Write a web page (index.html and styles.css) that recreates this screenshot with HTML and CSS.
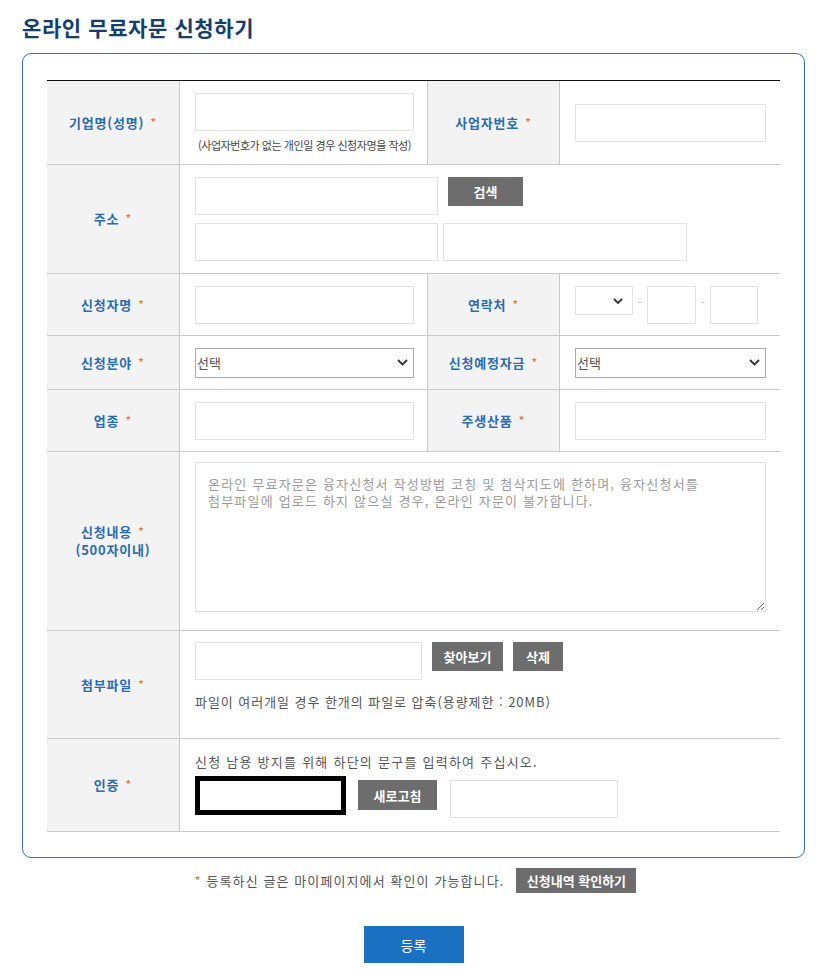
FILE: index.html
```html
<!DOCTYPE html>
<html lang="ko">
<head>
<meta charset="utf-8">
<title>온라인 무료자문 신청하기</title>
<link rel="stylesheet" href="styles.css">
</head>
<body>
<div class="page">
  <h1 class="title">온라인 무료자문 신청하기</h1>
  <div class="box">
    <table class="form">
      <colgroup><col class="c-lab"><col class="c-val"><col class="c-lab2"><col class="c-val2"></colgroup>
      <tbody>
        <tr class="r1">
          <th>기업명(성명)<span class="req">*</span></th>
          <td class="mid">
            <div class="stack">
              <input class="inp w219" type="text">
              <p class="note">(사업자번호가 없는 개인일 경우 신청자명을 작성)</p>
            </div>
          </td>
          <th>사업자번호<span class="req">*</span></th>
          <td><input class="inp w191" type="text"></td>
        </tr>
        <tr class="r2">
          <th>주소<span class="req">*</span></th>
          <td colspan="3">
            <div class="line gap10"><input class="inp w243" type="text"><button class="btn w75" type="button">검색</button></div>
            <div class="line gap5 mt8"><input class="inp w243" type="text"><input class="inp w244" type="text"></div>
          </td>
        </tr>
        <tr class="r3">
          <th>신청자명<span class="req">*</span></th>
          <td class="mid"><input class="inp w219" type="text"></td>
          <th>연락처<span class="req">*</span></th>
          <td>
            <div class="line phone">
              <span class="sel-wrap">
                <select class="sel sel-light w58"><option></option></select>
                <svg class="chev chev-sm" width="10" height="6" viewBox="0 0 10 6"><path d="M1 1l4 4 4-4" fill="none" stroke="#333" stroke-width="1.8"/></svg>
              </span>
              <span class="dash">-</span>
              <input class="inp w49" type="text">
              <span class="dash">-</span>
              <input class="inp w48" type="text">
            </div>
          </td>
        </tr>
        <tr class="r4">
          <th>신청분야<span class="req">*</span></th>
          <td class="mid">
            <span class="sel-wrap">
              <select class="sel w219"><option>선택</option></select>
              <svg class="chev" width="11" height="7" viewBox="0 0 11 7"><path d="M1 1l4.5 4.5 4.5-4.5" fill="none" stroke="#333" stroke-width="1.9"/></svg>
            </span>
          </td>
          <th>신청예정자금<span class="req">*</span></th>
          <td>
            <span class="sel-wrap">
              <select class="sel w191"><option>선택</option></select>
              <svg class="chev" width="11" height="7" viewBox="0 0 11 7"><path d="M1 1l4.5 4.5 4.5-4.5" fill="none" stroke="#333" stroke-width="1.9"/></svg>
            </span>
          </td>
        </tr>
        <tr class="r5">
          <th>업종<span class="req">*</span></th>
          <td class="mid"><input class="inp w219" type="text"></td>
          <th>주생산품<span class="req">*</span></th>
          <td><input class="inp w191" type="text"></td>
        </tr>
        <tr class="r6">
          <th>신청내용<span class="req">*</span><br>(500자이내)</th>
          <td colspan="3" class="top-cell pad10">
            <textarea class="txt" placeholder="온라인 무료자문은 융자신청서 작성방법 코칭 및 첨삭지도에 한하며, 융자신청서를&#10;첨부파일에 업로드 하지 않으실 경우, 온라인 자문이 불가합니다."></textarea>
          </td>
        </tr>
        <tr class="r7">
          <th>첨부파일<span class="req">*</span></th>
          <td colspan="3" class="top-cell pad11">
            <div class="line gap10"><input class="inp w227" type="text"><button class="btn w71" type="button">찾아보기</button><button class="btn w50" type="button">삭제</button></div>
            <p class="hint hint-file">파일이 여러개일 경우 한개의 파일로 압축(용량제한 : 20MB)</p>
          </td>
        </tr>
        <tr class="r8">
          <th>인증<span class="req">*</span></th>
          <td colspan="3" class="top-cell pad14">
            <p class="hint hint-auth">신청 남용 방지를 위해 하단의 문구를 입력하여 주십시오.</p>
            <div class="line captcha-row">
              <div class="captcha"></div>
              <button class="btn w79 refresh" type="button">새로고침</button>
              <input class="inp w168 captcha-inp" type="text">
            </div>
          </td>
        </tr>
      </tbody>
    </table>
  </div>
  <div class="foot">
    <p class="foot-note"><span class="req-foot">*</span> 등록하신 글은 마이페이지에서 확인이 가능합니다.</p>
    <a class="btn btn-history">신청내역 확인하기</a>
  </div>
  <div class="submit-row"><button class="btn-submit" type="button">등록</button></div>
</div>
</body>
</html>
```

FILE: styles.css
```css
* { box-sizing: border-box; }

body {
  margin: 0;
  background: #fff;
  color: #555;
  font-family: "Noto Sans CJK KR", "Noto Sans", sans-serif;
  font-size: 13px;
}

input, select, textarea, button { font-family: inherit; }

.page {
  width: 783px;
  margin-left: 22px;
}

.title {
  margin: 0 0 13px;
  padding-top: 14px;
  font-size: 21px;
  line-height: 26px;
  font-weight: 700;
  letter-spacing: 0.6px;
  color: #173d6d;
}

.box {
  border: 1px solid #3572ad;
  border-radius: 9px;
  padding: 26px 24px 25px;
}

.form {
  width: 733px;
  border-collapse: separate;
  border-spacing: 0;
  table-layout: fixed;
  border-top: 1px solid #111;
}

.c-lab { width: 133px; }
.c-val { width: 248px; }
.c-lab2 { width: 132px; }
.c-val2 { width: 220px; }

.r1 { height: 84px; }
.r2 { height: 109px; }
.r3 { height: 62px; }
.r4 { height: 54px; }
.r5 { height: 62px; }
.r6 { height: 179px; }
.r7 { height: 108px; }
.r8 { height: 93px; }

.form th {
  background: #f3f3f3;
  color: #2a6bb1;
  font-size: 13px;
  font-weight: 700;
  line-height: 18px;
  letter-spacing: 0.8px;
  text-align: center;
  vertical-align: middle;
  padding: 0;
  border-right: 1px solid #c9c9c9;
  border-bottom: 1px solid #c9c9c9;
}

.form td {
  vertical-align: middle;
  padding: 0 0 0 15px;
  border-bottom: 1px solid #c9c9c9;
}

.form td.mid { border-right: 1px solid #c9c9c9; }
.form td.top-cell { vertical-align: top; }
.form td.pad10 { padding-top: 10px; }
.form td.pad11 { padding-top: 11px; }
.form td.pad14 { padding-top: 14px; }

.req {
  color: #e8743b;
  margin-left: 6px;
  font-weight: 400;
}

.inp {
  display: block;
  height: 38px;
  border: 1px solid #e3e3e3;
  background: #fff;
  padding: 0 8px;
  font-size: 13px;
  outline: none;
}

.w219 { width: 219px; }
.w191 { width: 191px; }
.w243 { width: 243px; }
.w244 { width: 244px; }
.w227 { width: 227px; }
.w168 { width: 168px; }
.w58 { width: 58px; }
.w49 { width: 49px; }
.w48 { width: 48px; }
.w75 { width: 75px; }
.w71 { width: 71px; }
.w50 { width: 50px; }
.w79 { width: 79px; }

.stack { width: 219px; }

.note {
  margin: 6px 0 0;
  font-size: 11px;
  line-height: 16px;
  letter-spacing: -0.45px;
  text-align: center;
  color: #444;
  white-space: nowrap;
}

.line {
  display: flex;
  align-items: flex-start;
}
.gap10 { gap: 10px; }
.gap5 { gap: 5px; }
.mt8 { margin-top: 8px; }

.btn {
  display: inline-flex;
  align-items: center;
  justify-content: center;
  height: 29px;
  border: 0;
  padding: 0;
  background: #6d6d6d;
  color: #fff;
  font-size: 13px;
  font-weight: 700;
  text-decoration: none;
  cursor: pointer;
}

.sel-wrap {
  position: relative;
  display: inline-block;
  vertical-align: top;
}

.sel {
  display: block;
  height: 30px;
  border: 1px solid #aaa;
  background: #fff;
  color: #555;
  font-size: 13px;
  padding: 0 0 0 1px;
  appearance: none;
  -webkit-appearance: none;
  border-radius: 0;
  outline: none;
}

.sel-light {
  height: 29px;
  border-color: #e3e3e3;
}

.chev {
  position: absolute;
  right: 6px;
  top: 11px;
  pointer-events: none;
}

.chev-sm {
  right: 10px;
  top: 12px;
}

.dash {
  display: block;
  width: 14px;
  line-height: 31px;
  text-align: center;
  color: #c4c4c4;
  font-size: 12px;
}

.txt {
  display: block;
  width: 571px;
  height: 150px;
  border: 1px solid #e3e3e3;
  padding: 12px;
  font-size: 13px;
  line-height: 17px;
  letter-spacing: 1.2px;
  color: #555;
  outline: none;
}
.txt::placeholder { color: #9a9a9a; }

.hint {
  margin: 0;
  font-size: 13px;
  line-height: 18px;
  color: #555;
}

.hint-file {
  margin-top: 13px;
  letter-spacing: 0.95px;
}

.hint-auth { letter-spacing: 1.25px; }

.captcha-row { margin-top: 5px; }

.captcha {
  width: 151px;
  height: 39px;
  border: 5px solid #000;
  background: #fff;
}

.refresh {
  height: 30px;
  margin: 4px 0 0 12px;
}

.captcha-inp { margin: 4px 0 0 13px; }

.foot {
  display: flex;
  justify-content: center;
  align-items: center;
  gap: 12px;
  margin-top: 10px;
  height: 25px;
  padding-left: 4px;
}

.foot-note {
  margin: 0;
  font-size: 13px;
  line-height: 18px;
  letter-spacing: 1.1px;
  color: #555;
}

.req-foot { color: #e8743b; }

.btn-history {
  width: 120px;
  height: 25px;
}

.submit-row {
  display: flex;
  justify-content: center;
  margin-top: 33px;
}

.btn-submit {
  width: 100px;
  height: 37px;
  border: 0;
  background: #1b71c1;
  color: #fff;
  font-size: 14px;
  cursor: pointer;
}
```
